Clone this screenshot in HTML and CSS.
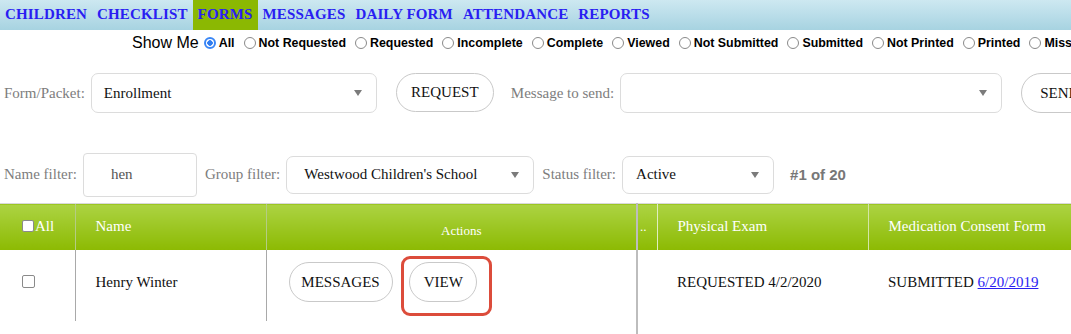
FILE: index.html
```html
<!DOCTYPE html>
<html lang="en">

<head>
    <meta charset="UTF-8">
    <title>Forms</title>
    <link rel="stylesheet" href="styles.css">
</head>

<body>
    <!-- Top nav -->
    <div class="nav">
        <a href="#">CHILDREN</a>
        <a href="#">CHECKLIST</a>
        <a href="#" class="active">FORMS</a>
        <a href="#">MESSAGES</a>
        <a href="#">DAILY FORM</a>
        <a href="#">ATTENDANCE</a>
        <a href="#">REPORTS</a>
    </div>

    <!-- Show me filter -->
    <div class="show-me">
        <span class="show-label">Show Me</span>
        <label><input type="radio" name="show" checked>All</label>
        <label><input type="radio" name="show">Not Requested</label>
        <label><input type="radio" name="show">Requested</label>
        <label><input type="radio" name="show">Incomplete</label>
        <label><input type="radio" name="show">Complete</label>
        <label><input type="radio" name="show">Viewed</label>
        <label><input type="radio" name="show">Not Submitted</label>
        <label><input type="radio" name="show">Submitted</label>
        <label><input type="radio" name="show">Not Printed</label>
        <label><input type="radio" name="show">Printed</label>
        <label><input type="radio" name="show">Missing</label>
    </div>

    <!-- Request row -->
    <div class="row request-row">
        <span class="field-label">Form/Packet:</span>
        <div class="select packet-select"><span>Enrollment</span><i class="caret"></i></div>
        <button class="pill request-btn">REQUEST</button>
        <span class="field-label msg-label">Message to send:</span>
        <div class="select message-select"><span></span><i class="caret"></i></div>
        <button class="pill send-btn">SEND</button>
    </div>

    <!-- Filters row -->
    <div class="row filter-row">
        <span class="field-label">Name filter:</span>
        <input type="text" class="name-input" value="hen">
        <span class="field-label">Group filter:</span>
        <div class="select group-select"><span>Westwood Children's School</span><i class="caret"></i></div>
        <span class="field-label">Status filter:</span>
        <div class="select status-select"><span>Active</span><i class="caret"></i></div>
        <span class="count">#1 of 20</span>
    </div>

    <!-- Grid -->
    <div class="grid">
        <table class="pane left-pane">
            <colgroup>
                <col style="width: 75px">
                <col style="width: 191px">
                <col style="width: 370px">
            </colgroup>
            <thead>
                <tr>
                    <th class="check-col"><input type="checkbox" class="check">All</th>
                    <th>Name</th>
                    <th class="actions-head">Actions</th>
                </tr>
            </thead>
            <tbody>
                <tr>
                    <td class="check-col"><input type="checkbox" class="check"></td>
                    <td>Henry Winter</td>
                    <td class="actions">
                        <button class="pill messages-btn">MESSAGES</button>
                        <span class="highlight"><button class="pill view-btn">VIEW</button></span>
                    </td>
                </tr>
            </tbody>
        </table>
        <div class="splitter"></div>
        <table class="pane right-pane">
            <colgroup>
                <col style="width: 19px">
                <col style="width: 211px">
                <col style="width: 260px">
            </colgroup>
            <thead>
                <tr>
                    <th class="dots">..</th>
                    <th>Physical Exam</th>
                    <th>Medication Consent Form</th>
                </tr>
            </thead>
            <tbody>
                <tr>
                    <td class="dots"></td>
                    <td>REQUESTED 4/2/2020</td>
                    <td>SUBMITTED <a href="#">6/20/2019</a></td>
                </tr>
            </tbody>
        </table>
    </div>
</body>

</html>
```

FILE: styles.css
```css
body, html {
    margin: 0;
    height: 100%;
    overflow: hidden;
    font-family: 'Liberation Serif', 'Times New Roman', serif;
    background: #ffffff;
}

/* Top nav */
.nav {
    display: flex;
    height: 30px;
    background: linear-gradient(#cde8f1, #a7d3e1);
    white-space: nowrap;
}

.nav a {
    padding: 0 5px;
    line-height: 28px;
    font-size: 15px;
    font-weight: bold;
    letter-spacing: 0.15px;
    color: #2a1ef2;
    text-decoration: none;
}

.nav a.active {
    background-color: #8bb802;
}

/* Show me */
.show-me {
    display: flex;
    align-items: center;
    height: 25px;
    padding-left: 132px;
    font-family: 'Liberation Sans', Arial, sans-serif;
    white-space: nowrap;
}

.show-label {
    font-size: 16px;
    margin-right: 5px;
}

.show-me label {
    display: flex;
    align-items: center;
    font-size: 12.4px;
    font-weight: bold;
    margin-right: 9px;
}

.show-me input {
    appearance: none;
    flex: none;
    width: 12px;
    height: 12px;
    margin: 0 3px 0 0;
    border: 1px solid #8a8a8a;
    border-radius: 50%;
    background: #fff;
    box-sizing: border-box;
}

.show-me input:checked {
    border: 2px solid #3a86f5;
    background: radial-gradient(circle, #2f7cf0 0 2.5px, #fff 3px);
}

/* Control rows */
.row {
    display: flex;
    align-items: center;
    padding-left: 4px;
    white-space: nowrap;
}

.row > * {
    flex: none;
}

.request-row {
    margin-top: 18px;
    height: 40px;
}

.filter-row {
    margin-top: 39px;
    height: 45px;
}

.field-label {
    font-size: 15px;
    color: #7d7d7d;
    margin-right: 6px;
}

.select {
    display: flex;
    align-items: center;
    justify-content: space-between;
    box-sizing: border-box;
    height: 40px;
    padding: 0 14px 0 12px;
    border: 1px solid #dcdcdc;
    border-radius: 7px;
    font-size: 15px;
    color: #111;
}

.caret {
    width: 0;
    height: 0;
    border-left: 4px solid transparent;
    border-right: 4px solid transparent;
    border-top: 6px solid #7b7b7b;
}

.packet-select {
    width: 286px;
}

.message-select {
    width: 382px;
}

.group-select {
    width: 248px;
    height: 38px;
    padding-left: 17px;
    margin-right: 8px;
}

.status-select {
    width: 152px;
    height: 38px;
    padding-left: 13px;
}

.pill {
    box-sizing: border-box;
    height: 40px;
    padding: 0 14px;
    border: 1px solid #c9c9c9;
    border-radius: 20px;
    background: #fff;
    font-family: 'Liberation Serif', 'Times New Roman', serif;
    font-size: 15px;
    color: #111;
}

.request-btn {
    margin-left: 19px;
    width: 98px;
    height: 39px;
    padding: 0;
    margin-top: -2px;
}

.msg-label {
    margin-left: 17px;
}

.send-btn {
    margin-left: 19px;
    width: 80px;
    padding-left: 18px;
    text-align: left;
}

.name-input {
    box-sizing: border-box;
    width: 114px;
    height: 44px;
    padding-left: 27px;
    margin-right: 8px;
    border: 1px solid #dcdcdc;
    border-radius: 4px;
    font-family: 'Liberation Serif', 'Times New Roman', serif;
    font-size: 15px;
    color: #555;
    outline: none;
}

.count {
    margin-left: 16px;
    font-family: 'Liberation Sans', Arial, sans-serif;
    font-weight: bold;
    font-size: 15px;
    color: #777;
}

/* Grid */
.grid {
    display: flex;
    margin-top: 6px;
    height: 200px;
}

.pane {
    border-collapse: collapse;
    table-layout: fixed;
    flex: none;
    align-self: flex-start;
}

.left-pane {
    width: 636px;
}

.right-pane {
    width: 490px;
}

.splitter {
    flex: none;
    width: 2px;
    background-color: #bdbdbd;
}

.pane th {
    height: 46px;
    padding: 0 0 0 20px;
    box-sizing: border-box;
    text-align: left;
    font-weight: normal;
    font-size: 15px;
    color: #fff;
    background: linear-gradient(#acd343, #8cba02);
    border-top: 1px solid #d9d9d9;
    border-left: 1px solid #b4cc84;
    white-space: nowrap;
    overflow: hidden;
}

.pane td {
    height: 71px;
    padding: 0 0 6px 20px;
    box-sizing: border-box;
    font-size: 15px;
    color: #111;
    border-left: 1px solid #a9a9a9;
    white-space: nowrap;
}

.pane th:first-child,
.pane td:first-child {
    border-left: none;
}

.right-pane th.dots {
    padding: 0 0 0 2px;
    font-size: 13px;
}

.right-pane td.dots {
    border: none;
}

.right-pane th:nth-child(2) {
    border-left: 1px solid #dfeec0;
}

.right-pane th:nth-child(3) {
    border-left: 1px solid #d4e6a6;
}

.right-pane td {
    border-left: none;
}

.check-col {
    padding-left: 22px !important;
}

.check {
    appearance: none;
    width: 12px;
    height: 12px;
    margin: 0 1px 0 0;
    border: 1px solid #8a8a8a;
    border-radius: 2px;
    background: #fff;
    vertical-align: -1px;
}

td .check {
    width: 13px;
    height: 13px;
}

.actions-head {
    text-align: center !important;
    font-size: 13px !important;
    padding-top: 8px !important;
}

.actions {
    padding-left: 22px !important;
}

.actions .pill {
    vertical-align: middle;
    padding: 0;
}

.messages-btn {
    width: 104px;
}

.view-btn {
    width: 68px;
}

.highlight {
    position: relative;
    display: inline-block;
    margin-left: 13px;
    vertical-align: middle;
}

/* red annotation box around VIEW */
.highlight::after {
    content: "";
    position: absolute;
    left: -8px;
    right: -15px;
    top: -6px;
    bottom: -14px;
    border: 3px solid #dc4c3b;
    border-radius: 9px;
}

.pane a {
    color: #2a1ef2;
}
```
